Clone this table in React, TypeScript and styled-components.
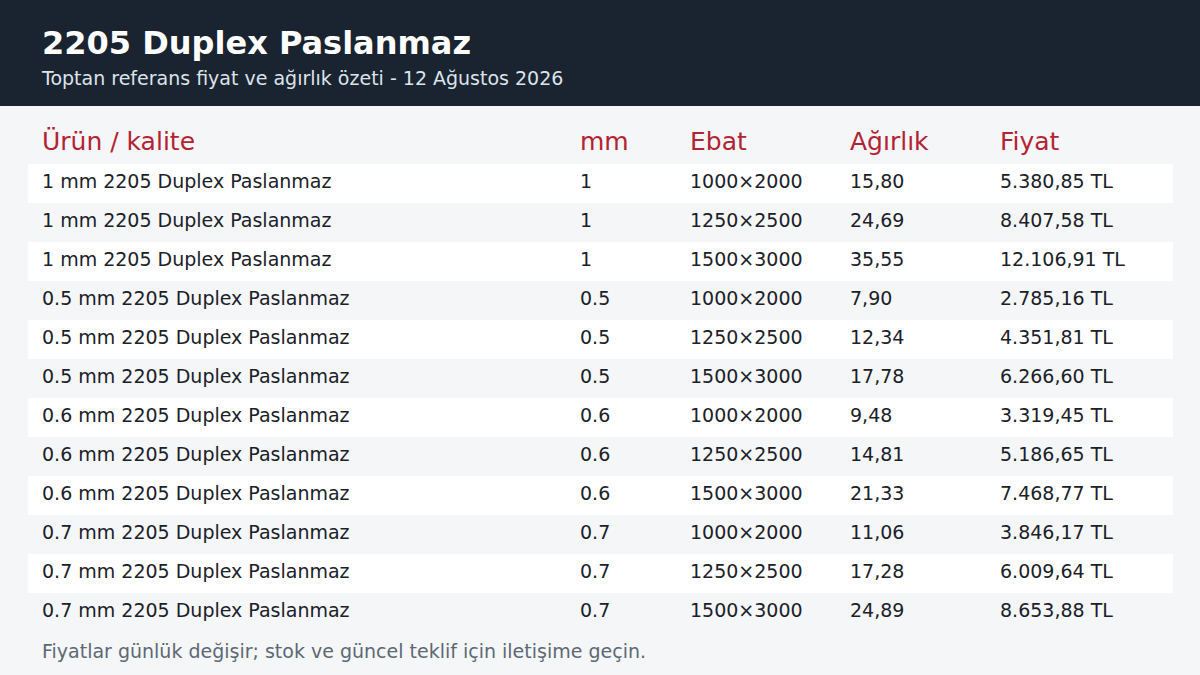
import React from "react";
import styled, { createGlobalStyle } from "styled-components";

const GlobalStyle = createGlobalStyle`
  html, body {
    margin: 0;
    padding: 0;
    background: #f4f6f8;
    font-family: "DejaVu Sans", "Liberation Sans", sans-serif;
  }
`;

const Page = styled.div`
  width: 1200px;
  height: 675px;
  overflow: hidden;
  background: #f4f6f8;
`;

const Header = styled.header`
  background: #1a2330;
  height: 106px;
  box-sizing: border-box;
  padding: 22px 42px 0;
`;

const Title = styled.h1`
  margin: 0;
  color: #ffffff;
  font-size: 32px;
  font-weight: 700;
  line-height: 42px;
`;

const Subtitle = styled.div`
  color: #dde3ea;
  font-size: 19px;
  line-height: 28px;
`;

const Body = styled.main`
  padding: 16px 27px 0 28px;
`;

const Table = styled.table`
  width: 1145px;
  border-collapse: collapse;
  table-layout: fixed;
`;

const Th = styled.th<{ $w: number }>`
  width: ${(p) => p.$w - 28}px;
  text-align: left;
  font-weight: 400;
  font-size: 25px;
  color: #b32433;
  padding: 0 14px 4px;
  height: 38px;
  vertical-align: middle;
`;

const Row = styled.tr<{ $alt: boolean }>`
  background: ${(p) => (p.$alt ? "transparent" : "#ffffff")};
`;

const Td = styled.td`
  padding: 0 14px 5px;
  height: 34px;
  font-size: 19px;
  line-height: 22px;
  color: #1b2129;
  white-space: nowrap;
  vertical-align: middle;
`;

const Note = styled.p`
  margin: 7px 0 0 14px;
  font-size: 19px;
  line-height: 24px;
  color: #5e6873;
`;

const cols = [
  { label: "Ürün / kalite", w: 538 },
  { label: "mm", w: 110 },
  { label: "Ebat", w: 160 },
  { label: "Ağırlık", w: 150 },
  { label: "Fiyat", w: 187 },
];

const rows: string[][] = [
  ["1 mm 2205 Duplex Paslanmaz", "1", "1000×2000", "15,80", "5.380,85 TL"],
  ["1 mm 2205 Duplex Paslanmaz", "1", "1250×2500", "24,69", "8.407,58 TL"],
  ["1 mm 2205 Duplex Paslanmaz", "1", "1500×3000", "35,55", "12.106,91 TL"],
  ["0.5 mm 2205 Duplex Paslanmaz", "0.5", "1000×2000", "7,90", "2.785,16 TL"],
  ["0.5 mm 2205 Duplex Paslanmaz", "0.5", "1250×2500", "12,34", "4.351,81 TL"],
  ["0.5 mm 2205 Duplex Paslanmaz", "0.5", "1500×3000", "17,78", "6.266,60 TL"],
  ["0.6 mm 2205 Duplex Paslanmaz", "0.6", "1000×2000", "9,48", "3.319,45 TL"],
  ["0.6 mm 2205 Duplex Paslanmaz", "0.6", "1250×2500", "14,81", "5.186,65 TL"],
  ["0.6 mm 2205 Duplex Paslanmaz", "0.6", "1500×3000", "21,33", "7.468,77 TL"],
  ["0.7 mm 2205 Duplex Paslanmaz", "0.7", "1000×2000", "11,06", "3.846,17 TL"],
  ["0.7 mm 2205 Duplex Paslanmaz", "0.7", "1250×2500", "17,28", "6.009,64 TL"],
  ["0.7 mm 2205 Duplex Paslanmaz", "0.7", "1500×3000", "24,89", "8.653,88 TL"],
];

const App = () => {
  return (
    <Page>
      <GlobalStyle />
      <Header>
        <Title>2205 Duplex Paslanmaz</Title>
        <Subtitle>Toptan referans fiyat ve ağırlık özeti - 12 Ağustos 2026</Subtitle>
      </Header>
      <Body>
        <Table>
          <thead>
            <tr>
              {cols.map((c) => (
                <Th key={c.label} $w={c.w}>
                  {c.label}
                </Th>
              ))}
            </tr>
          </thead>
          <tbody>
            {rows.map((r, i) => (
              <Row key={i} $alt={i % 2 === 1}>
                {r.map((cell, j) => (
                  <Td key={j}>{cell}</Td>
                ))}
              </Row>
            ))}
          </tbody>
        </Table>
        <Note>Fiyatlar günlük değişir; stok ve güncel teklif için iletişime geçin.</Note>
      </Body>
    </Page>
  );
};

export default App;
